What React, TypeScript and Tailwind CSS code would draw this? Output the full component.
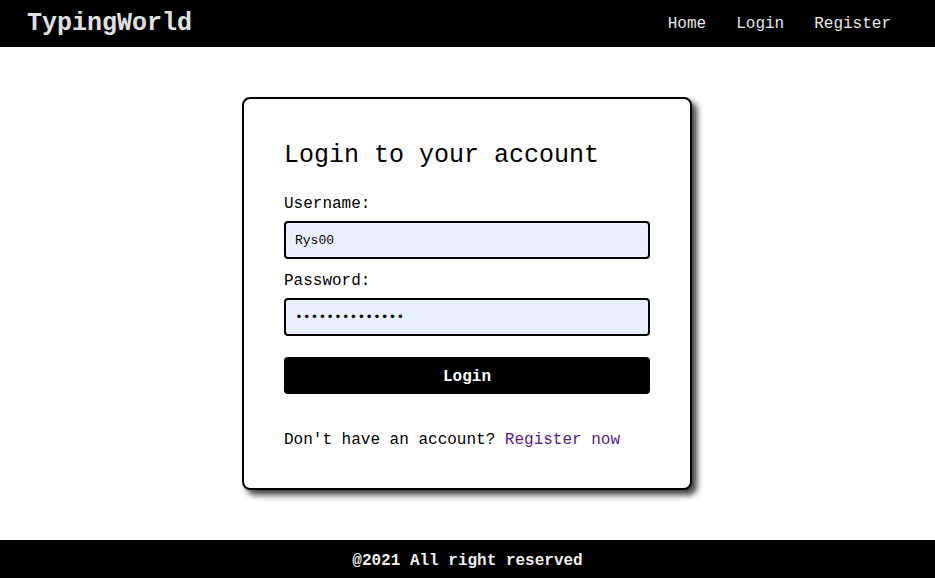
import React from "react";

export default function App() {
  const mono = { fontFamily: '"Liberation Mono", "Courier New", monospace' };
  return (
    <div className="flex min-h-[578px] flex-col bg-white text-black" style={mono}>
      <header className="flex h-[47px] items-center justify-between bg-black pl-[27px] pr-[44px]">
        <div className="text-[25px] font-bold leading-none text-[#e0e0e0]">TypingWorld</div>
        <nav className="flex gap-[30px] text-[16px] leading-none text-[#e8e8e8]">
          <span>Home</span>
          <span>Login</span>
          <span>Register</span>
        </nav>
      </header>
      <main className="flex flex-1 justify-center py-[50px] pr-px">
        <div className="w-[450px] rounded-[8px] border-2 border-black bg-white px-10 pt-10 pb-[39px] shadow-[5px_5px_6px_rgba(0,0,0,0.75)]">
          <h2 className="mt-[3px] text-[25px] leading-[28px]">Login to your account</h2>
          <div className="mt-[25px] text-[16px] leading-[18px]">Username:</div>
          <input
            readOnly
            defaultValue="Rys00"
            className="mt-[8px] block h-[38px] w-full rounded-[4px] border-2 border-black bg-[#e8f0fe] px-[9px] text-[13px] outline-none"
            style={mono}
          />
          <div className="mt-[13px] text-[16px] leading-[18px]">Password:</div>
          <input
            readOnly
            type="password"
            defaultValue="12345678901234"
            className="mt-[8px] block h-[38px] w-full rounded-[4px] border-2 border-black bg-[#e8f0fe] px-[9px] text-[13px] outline-none"
            style={mono}
          />
          <button
            className="mt-[21px] flex h-[37px] w-full items-center justify-center rounded-[4px] bg-black pt-[3px] text-[16px] font-bold text-white"
            style={mono}
          >
            Login
          </button>
          <div className="mt-[37px] text-[16px] leading-[18px]">
            Don't have an account? <span className="text-[#551a8b]">Register now</span>
          </div>
        </div>
      </main>
      <footer className="flex h-[38px] items-center justify-center bg-black pt-[3px] text-[16px] font-bold text-[#f0f0f0]">
        @2021 All right reserved
      </footer>
    </div>
  );
}
